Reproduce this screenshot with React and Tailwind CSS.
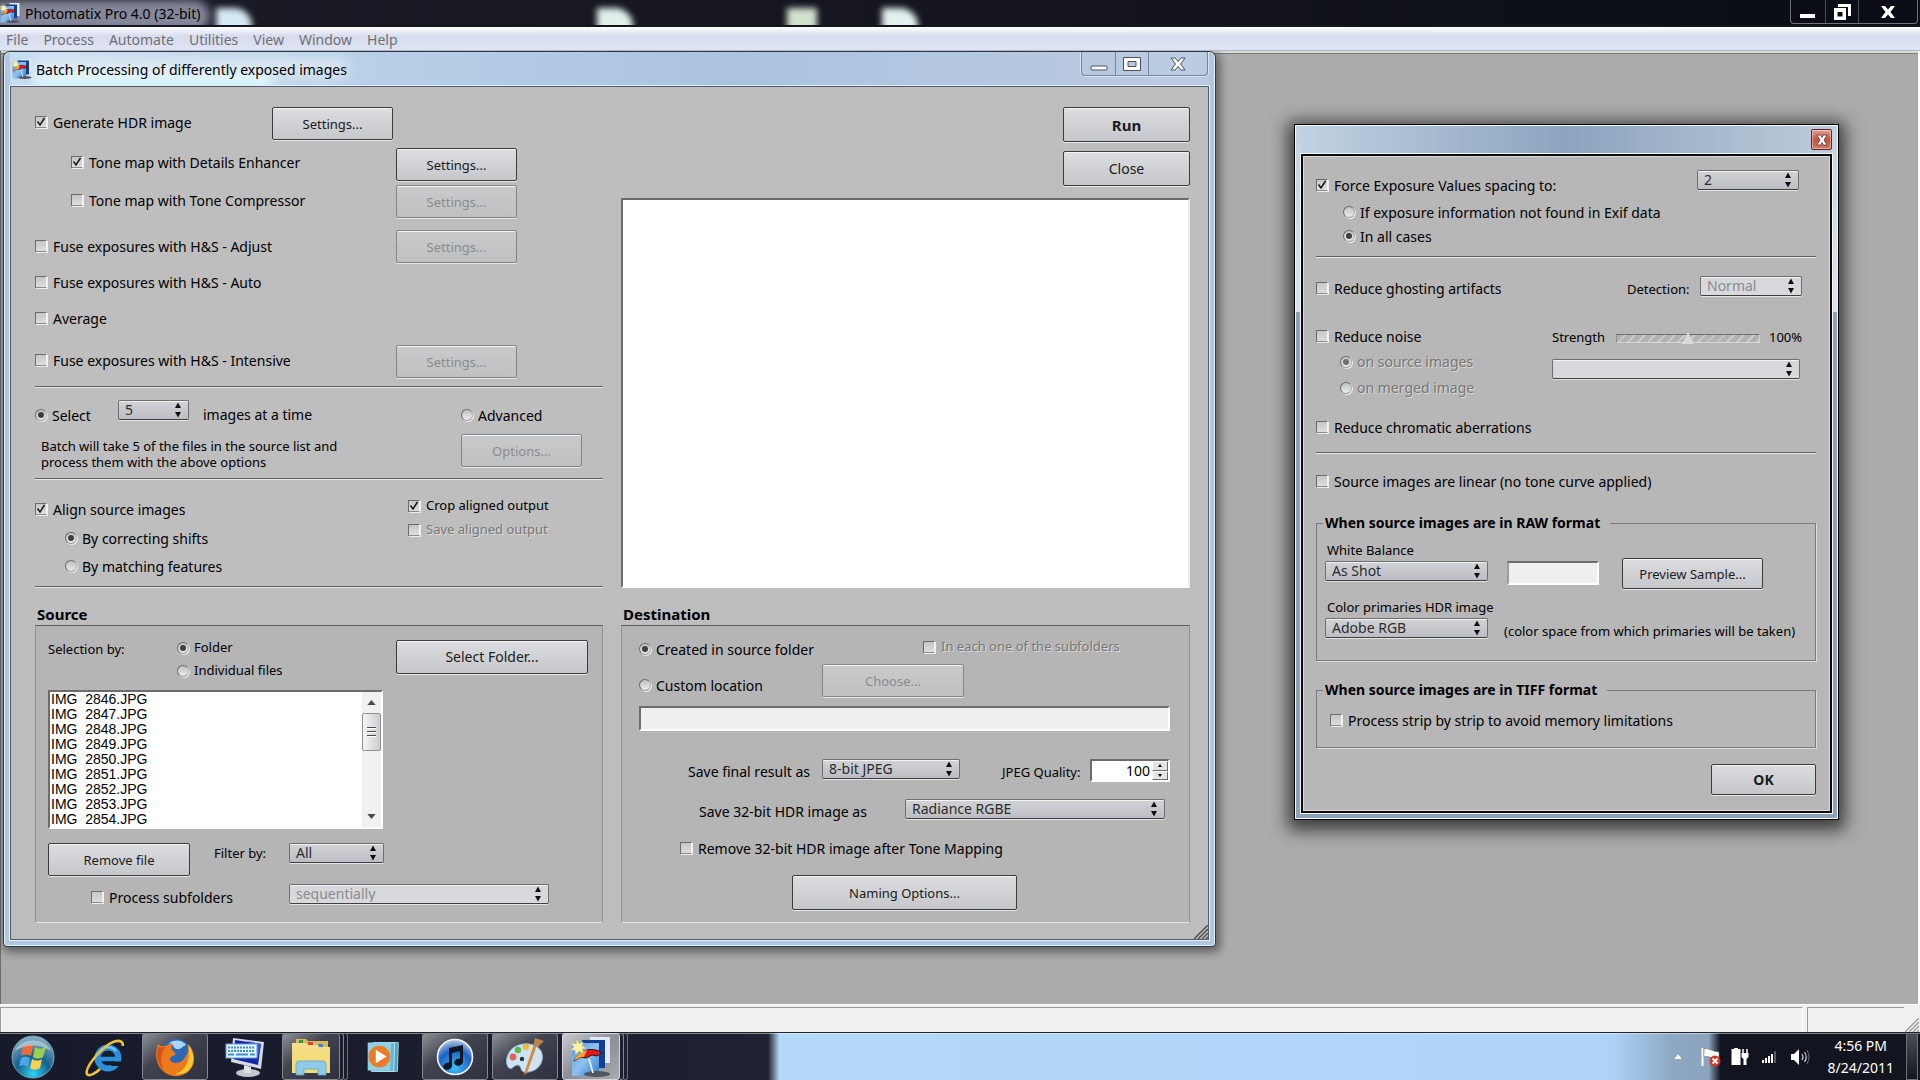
import React, {useId} from "react";
import clsx from "clsx";

const menuItems = ['File', 'Process', 'Automate', 'Utilities', 'View', 'Window', 'Help']

const files = [
  'IMG  2846.JPG',
  'IMG  2847.JPG',
  'IMG  2848.JPG',
  'IMG  2849.JPG',
  'IMG  2850.JPG',
  'IMG  2851.JPG',
  'IMG  2852.JPG',
  'IMG  2853.JPG',
  'IMG  2854.JPG',
]

/**
 * Umbrella logo, shared by the title bars and the taskbar.
 */
const PhotomatixIcon = ({className}) => (
  <svg viewBox="0 0 40 40" className={className} aria-hidden="true">
    <defs>
      <linearGradient id="pm-front" x1="0" y1="0" x2="1" y2="1">
        <stop offset="0" stopColor="#4f9be6"/>
        <stop offset="0.5" stopColor="#8fc2ef"/>
        <stop offset="1" stopColor="#2f78d2"/>
      </linearGradient>
    </defs>
    <rect x="19" y="0" width="20" height="26" fill="#dfe9f8"/>
    <rect x="11" y="3" width="23" height="28" fill="#123f8f"/>
    <rect x="1" y="6" width="27" height="33" fill="url(#pm-front)"/>
    <ellipse cx="26" cy="37" rx="13" ry="3" fill="#51565e"/>
    <path d="M18 22 L22 36" stroke="#f4f4f4" strokeWidth="1.6"/>
    <path d="M3 24 C6 15 20 8 31 16 L26 19 L21 18 L15 21 L10 20 Z" fill="#e0181a" stroke="#2a1010" strokeWidth="1"/>
    <path d="M3 24 C5 18 10 14 16 13 L13 20 L10 20 Z" fill="#f6a13a"/>
    <path d="M6 3 L8 7 L12 5 L11 9 L15 11 L11 12 L12 16 L8 14 L5 17 L4 13 L0 13 L3 10 L0 6 L5 7 Z" fill="#fff3a8" stroke="#e6cf6a" strokeWidth="0.6"/>
  </svg>
)

/**
 *
 */
const Button = ({className, disabled, children}) => (
  <button type="button"
          disabled={disabled}
          className={clsx(
            'shrink-0 rounded-[2px] border bg-linear-to-b text-center text-[13px] leading-5 shadow-[0_1px_0_#e8e8e8,inset_0_1px_0_#f4f4f4]',
            disabled ? 'border-[#858585] from-[#c9cacb] to-[#bfc0c2] text-[#8b8b8b]' : 'border-[#3c3c3c] from-[#dcdde0] to-[#c5c7cb] text-[#1b1b1b]',
            className
          )}>
    {children}
  </button>
)

/**
 * Checkbox with its caption.
 */
const Check = ({label, checked, disabled, small, className}) => (
  <label className={clsx('flex items-center gap-[6px] whitespace-nowrap', small ? 'text-[13px]' : 'text-[14px]', disabled && 'text-[#777777] [text-shadow:1px_1px_0_#dcdcdc]', className)}>
    <span className="grid size-3 shrink-0">
      <input type="checkbox"
             defaultChecked={checked}
             disabled={disabled}
             className="col-start-1 row-start-1 size-3 appearance-none border border-t-[#6c6c6c] border-l-[#6c6c6c] border-r-[#f6f6f6] border-b-[#8a8a8a] bg-linear-to-b from-[#c6c6c6] to-[#dedede] shadow-[1px_1px_0_#ededed]"/>
      {checked && (
        <svg viewBox="0 0 12 12" className="pointer-events-none col-start-1 row-start-1 size-3" aria-hidden="true">
          <path d="M2.5 5.5 L5 9 L9.5 2" fill="none" stroke="#161616" strokeWidth="1.5"/>
        </svg>
      )}
    </span>
    {label}
  </label>
)

/**
 * Radio button with its caption.
 */
const Radio = ({label, name, checked, disabled, small, className}) => (
  <label className={clsx('flex items-center gap-[5px] whitespace-nowrap', small ? 'text-[13px]' : 'text-[14px]', disabled && 'text-[#777777] [text-shadow:1px_1px_0_#dcdcdc]', className)}>
    <span className="grid size-3 shrink-0 place-items-center">
      <input type="radio"
             name={name}
             defaultChecked={checked}
             disabled={disabled}
             className="col-start-1 row-start-1 size-3 appearance-none rounded-full border border-t-[#6c6c6c] border-l-[#6c6c6c] border-r-[#b5b5b5] border-b-[#a0a0a0] bg-linear-to-b from-[#c0c0c0] to-[#ececec] shadow-[1px_1px_0_#ededed]"/>
      {checked && (
        <span className={clsx('pointer-events-none col-start-1 row-start-1 size-[6px] rounded-full', disabled ? 'bg-[#6e6e6e]' : 'bg-[#3f3f3f]')}/>
      )}
    </span>
    {label}
  </label>
)

/**
 * Pop-up menu with the double arrow on the right.
 */
const Select = ({id, value, disabled, className, title}) => (
  <span className={clsx('relative block h-5 shrink-0', className)}>
    <select id={id}
            aria-label={title}
            disabled={disabled}
            className={clsx(
              'block h-5 w-full appearance-none rounded-[2px] border border-[#6f6f6f] border-b-[#3f3f3f] bg-linear-to-b pl-[6px] text-[14px] leading-4 shadow-[0_1px_0_#e4e4e4,inset_0_1px_0_#f2f2f2] opacity-100',
              disabled ? 'from-[#d6d7da] to-[#d9dade] text-[#8b8b8b]' : 'from-[#d2d3d6] to-[#bdbec4] text-[#2c2c2c]'
            )}>
      <option>{value}</option>
    </select>
    <svg viewBox="0 0 6 16" className="pointer-events-none absolute top-[2px] right-2 h-4 w-[6px]" aria-hidden="true">
      <path d="M3 0.5 L6 6 H0 Z M3 15.5 L6 10 H0 Z" fill="#101010"/>
    </svg>
  </span>
)

/**
 *
 */
const Separator = () => (
  <hr className="h-[2px] border-0 border-t border-b border-t-[#5f5f5f] border-b-[#e9e9e9]"/>
)

const Grip = ({className, color}) => (
  <svg viewBox="0 0 14 14" className={className} aria-hidden="true">
    <path d="M0 14 L14 0 M4 14 L14 4 M8 14 L14 8 M12 14 L14 12" stroke={color} strokeWidth="1.4" fill="none"/>
  </svg>
)

/**
 * Checkboxes and options above the source panel.
 */
const ProcessOptions = () => (
  <div className="flex flex-col">
    <div className="flex items-start">
      <Check label="Generate HDR image" checked className="h-[30px] w-[237px]"/>
      <Button className="h-[33px] w-[121px]">Settings...</Button>
    </div>
    <div className="mt-2 flex items-start pl-9">
      <Check label="Tone map with Details Enhancer" checked className="h-7 w-[325px]"/>
      <Button className="h-[33px] w-[121px]">Settings...</Button>
    </div>
    <div className="mt-1 flex items-start pl-9">
      <Check label="Tone map with Tone Compressor" className="h-[30px] w-[325px]"/>
      <Button disabled className="h-[33px] w-[121px]">Settings...</Button>
    </div>
    <div className="mt-3 flex items-start">
      <Check label="Fuse exposures with H&S - Adjust" className="h-8 w-[361px]"/>
      <Button disabled className="h-[33px] w-[121px]">Settings...</Button>
    </div>
    <Check label="Fuse exposures with H&S - Auto" className="mt-1 h-[30px]"/>
    <Check label="Average" className="mt-[6px] h-[30px]"/>
    <div className="mt-3 mb-2 flex items-start">
      <Check label="Fuse exposures with H&S - Intensive" className="h-[30px] w-[361px]"/>
      <Button disabled className="h-[33px] w-[121px]">Settings...</Button>
    </div>

    <Separator/>

    <div className="mt-3 mb-2 flex">
      <div className="w-[426px]">
        <div className="flex items-start">
          <Radio name="mode" label="Select" checked className="h-[30px] w-[83px]"/>
          <Select id="count" title="Number of images" value="5" className="w-[71px]"/>
          <label htmlFor="count" className="ml-[14px] text-[14px] leading-[30px]">images at a time</label>
        </div>
        <p className="mt-2 pl-[6px] text-[13px] leading-4">
          Batch will take 5 of the files in the source list and<br/>
          process them with the above options
        </p>
      </div>
      <div>
        <Radio name="mode" label="Advanced" className="h-[30px]"/>
        <Button disabled className="mt-1 h-[33px] w-[121px]">Options...</Button>
      </div>
    </div>

    <Separator/>

    <div className="mt-[14px] mb-[6px] flex">
      <div className="w-[373px]">
        <Check label="Align source images" checked className="h-[30px]"/>
        <Radio name="align" label="By correcting shifts" checked className="ml-[30px] h-7"/>
        <Radio name="align" label="By matching features" className="ml-[30px] h-7"/>
      </div>
      <div>
        <Check small label="Crop aligned output" checked className="h-6"/>
        <Check small label="Save aligned output" disabled className="h-6"/>
      </div>
    </div>

    <Separator/>
  </div>
)

/**
 * Titled sunken panel.
 */
const Panel = ({title, className, children}) => (
  <section className="flex flex-col">
    <h2 className="pl-[2px] text-[15px] leading-[22px] font-bold">{title}</h2>
    <div className={clsx('flex flex-1 flex-col border border-x-[#929292] border-t-[#5f5f5f] border-b-[#e6e6e6] bg-[#b5b5b5]', className)}>
      {children}
    </div>
  </section>
)

/**
 *
 */
const FileList = () => (
  <div className="mt-2 flex h-[139px] w-[335px] border-2 border-t-[#6c6c6c] border-l-[#6c6c6c] border-r-white border-b-white bg-white">
    <ul className="flex-1 pl-px font-['Liberation_Sans',Arial,sans-serif] text-[14px] leading-[15px] whitespace-pre">
      {files.map((file) => (
        <li key={file}>{file}</li>
      ))}
    </ul>
    <div className="flex w-[19px] flex-col items-center bg-[#f1f1f1]">
      <svg viewBox="0 0 10 6" className="mt-2 h-[5px] w-[9px]" aria-hidden="true">
        <path d="M5 0 L10 6 H0 Z" fill="#4a4a4a"/>
      </svg>
      <div className="mt-2 flex h-[38px] w-[19px] flex-col items-center justify-center gap-[2px] rounded-[2px] border border-[#8f8f8f] bg-linear-to-r from-[#f4f4f4] to-[#cdced2]">
        <span className="h-[2px] w-[9px] border-t border-[#4c4c4c] bg-white"/>
        <span className="h-[2px] w-[9px] border-t border-[#4c4c4c] bg-white"/>
        <span className="h-[2px] w-[9px] border-t border-[#4c4c4c] bg-white"/>
      </div>
      <svg viewBox="0 0 10 6" className="mt-auto mb-2 h-[5px] w-[9px]" aria-hidden="true">
        <path d="M5 6 L10 0 H0 Z" fill="#4a4a4a"/>
      </svg>
    </div>
  </div>
)

const SourcePanel = () => (
  <Panel title="Source" className="pt-[10px] pr-[14px] pb-[10px] pl-3">
    <div className="flex items-start">
      <span className="w-[129px] text-[13px] leading-[27px]">Selection by:</span>
      <div className="w-[219px]">
        <Radio small name="by" label="Folder" checked className="h-[23px]"/>
        <Radio small name="by" label="Individual files" className="h-[23px]"/>
      </div>
      <Button className="mt-1 h-[34px] w-[192px] text-[14px]">Select Folder...</Button>
    </div>

    <FileList/>

    <div className="mt-[14px] flex items-start">
      <Button className="h-[33px] w-[142px]">Remove file</Button>
      <label htmlFor="filter" className="ml-6 w-[75px] text-[13px] leading-5">Filter by:</label>
      <Select id="filter" value="All" className="w-[95px]"/>
    </div>
    <div className="mt-2 flex items-start">
      <Check label="Process subfolders" className="h-[26px] w-[241px] pl-[43px]"/>
      <Select title="Subfolder order" value="sequentially" disabled className="w-[260px]"/>
    </div>
  </Panel>
)

const DestinationPanel = () => (
  <Panel title="Destination" className="pt-2 pr-[19px] pb-3 pl-[17px]">
    <div className="flex h-[30px] items-start">
      <Radio name="dest" label="Created in source folder" checked className="h-[30px] w-[284px]"/>
      <Check small label="In each one of the subfolders" disabled className="h-[26px]"/>
    </div>
    <div className="flex items-end">
      <Radio name="dest" label="Custom location" className="h-6 w-[183px]"/>
      <Button disabled className="h-[33px] w-[142px]">Choose...</Button>
    </div>
    <input type="text"
           aria-label="Custom location"
           className="mt-[9px] block h-[25px] w-full border-2 border-t-[#6c6c6c] border-l-[#6c6c6c] border-r-white border-b-white bg-[#efefef]"/>

    <div className="mt-7 flex items-start">
      <label htmlFor="format" className="w-[183px] pl-[49px] text-[14px] leading-[26px]">Save final result as</label>
      <Select id="format" value="8-bit JPEG" className="w-[138px]"/>
      <label htmlFor="quality" className="ml-auto w-[88px] text-[13px] leading-[26px]">JPEG Quality:</label>
      <div className="flex h-[23px] w-[80px] border-2 border-t-[#6c6c6c] border-l-[#6c6c6c] border-r-white border-b-white bg-white">
        <input id="quality" type="text" defaultValue="100" className="w-0 flex-1 pr-[2px] text-right text-[14px] leading-5"/>
        <div className="flex w-4 flex-col">
          <button type="button" aria-label="Increase" className="grid flex-1 place-items-center border border-white border-r-[#6c6c6c] border-b-[#6c6c6c] bg-[#e4e4e4]">
            <svg viewBox="0 0 4 3" className="h-[3px] w-1" aria-hidden="true"><path d="M2 0 L4 3 H0 Z"/></svg>
          </button>
          <button type="button" aria-label="Decrease" className="grid flex-1 place-items-center border border-white border-r-[#6c6c6c] border-b-[#6c6c6c] bg-[#e4e4e4]">
            <svg viewBox="0 0 4 3" className="h-[3px] w-1" aria-hidden="true"><path d="M2 3 L4 0 H0 Z"/></svg>
          </button>
        </div>
      </div>
    </div>
    <div className="mt-[14px] flex items-start pl-[60px]">
      <label htmlFor="hdr-format" className="w-[206px] text-[14px] leading-[26px]">Save 32-bit HDR image as</label>
      <Select id="hdr-format" value="Radiance RGBE" className="w-[260px]"/>
    </div>
    <Check label="Remove 32-bit HDR image after Tone Mapping" className="mt-[11px] ml-[41px] h-6"/>
    <Button className="mx-auto mt-[15px] h-[35px] w-[225px]">Naming Options...</Button>
  </Panel>
)

/**
 * Main batch window.
 */
const BatchWindow = () => (
  <section aria-label="Batch Processing"
           className="absolute top-0 left-[3px] w-[1213px] rounded-t-[7px] rounded-b-[4px] border border-[#2f3c4a] bg-[#b1c7e0] px-[6px] pb-[6px] shadow-[2px_3px_10px_2px_rgba(0,0,0,0.45),inset_0_0_0_1px_#e4effa]">
    <header className="relative flex h-[34px] items-center overflow-hidden bg-linear-to-r from-[#c6dcef] via-[#abc3df] via-60% to-[#bccbe0]">
      <span className="absolute top-5 left-6 h-5 w-60 rounded-full bg-[#d6f4fb] blur-[6px]"/>
      <span className="absolute top-1 left-5 h-6 w-80 rounded-full bg-white/40 blur-[6px]"/>
      <PhotomatixIcon className="relative ml-[2px] h-5 w-5"/>
      <h1 className="relative ml-1 pt-px text-[14px] leading-5">Batch Processing of differently exposed images</h1>
      <div className="relative mr-px ml-auto flex h-6 self-start rounded-b-[4px] border border-t-0 border-[#75879d] shadow-[0_0_0_1px_rgba(255,255,255,0.5)]">
        <button type="button" aria-label="Minimize" className="grid w-[34px] place-items-center border-r border-[#75879d]">
          <svg viewBox="0 0 18 14" className="h-[14px] w-[18px]"><rect x="1" y="9" width="16" height="4" rx="1" fill="#fff" stroke="#4b5360"/></svg>
        </button>
        <button type="button" aria-label="Maximize" className="grid w-[33px] place-items-center border-r border-[#75879d]">
          <svg viewBox="0 0 18 14" className="h-[14px] w-[18px]"><path d="M0.5 0.5 H17.5 V13.5 H0.5 Z M5 4.5 V9.5 H13 V4.5 Z" fill="#fff" fillRule="evenodd" stroke="#4b5360"/></svg>
        </button>
        <button type="button" aria-label="Close window" className="grid w-[58px] place-items-center">
          <svg viewBox="0 0 16 14" className="h-[14px] w-4"><path d="M1 1 H5 L8 4.5 L11 1 H15 L10.5 7 L15 13 H11 L8 9.5 L5 13 H1 L5.5 7 Z" fill="#fff" stroke="#4b5360"/></svg>
        </button>
      </div>
    </header>

    <div className="relative grid grid-cols-[568px_minmax(0,1fr)] gap-x-[18px] gap-y-[15px] border border-[#4e5c6c] bg-[#bebebe] pt-5 pr-[18px] pb-4 pl-6 shadow-[0_0_0_1px_#e4effa]">
      <ProcessOptions/>
      <div className="flex flex-col">
        <div className="flex flex-col items-end gap-[9px]">
          <Button className="h-[35px] w-[127px] text-[15px] font-bold">Run</Button>
          <Button className="h-[35px] w-[127px] text-[14px]">Close</Button>
        </div>
        <textarea readOnly
                  aria-label="Progress"
                  className="mt-3 block w-full flex-1 resize-none border-2 border-t-[#6c6c6c] border-l-[#6c6c6c] border-r-[#ededed] border-b-white bg-white"/>
      </div>
      <SourcePanel/>
      <DestinationPanel/>
      <Grip color="#4b4b4b" className="absolute right-0 bottom-0 size-[14px]"/>
    </div>
  </section>
)

/**
 * Fieldset with an etched frame.
 */
const Group = ({title, className, children}) => (
  <fieldset className={clsx('border border-[#7a7a7a] pl-2 shadow-[1px_1px_0_#dedede] outline-none', className)}>
    <legend className="-ml-[2px] bg-[#b7b7b7] pr-[10px] pl-[2px] text-[14px] leading-5 font-bold">{title}</legend>
    {children}
  </fieldset>
)

/**
 * HDR generation settings.
 */
const SettingsDialog = () => {
  const strengthId = useId()

  return (
    <section role="dialog"
             aria-label="Generate HDR settings"
             className="absolute top-[73px] left-[1294px] w-[545px] border border-black bg-linear-to-b from-[#c3d2e0] via-[#dbe4ec] via-27% to-[#8da1b7] to-27% px-[6px] pb-[6px] shadow-[0_4px_16px_6px_rgba(0,0,0,0.65),inset_0_0_0_1px_#f2f6fa]">
      <header className="my-px flex h-[27px] items-center justify-end bg-linear-to-r from-[#c0d2e2] via-[#8da4bf] to-[#bccbda]">
        <button type="button" aria-label="Close dialog" className="grid h-[21px] w-[21px] place-items-center rounded-[2px] border border-[#5b2a24] bg-linear-to-b from-[#e3a195] via-[#c4523c] to-[#d4795f] shadow-[inset_0_0_0_1px_rgba(255,255,255,0.4)]">
          <svg viewBox="0 0 12 12" className="size-3"><path d="M1 1 H4.5 L6 3.5 L7.5 1 H11 L8 6 L11 11 H7.5 L6 8.5 L4.5 11 H1 L4 6 Z" fill="#fff" stroke="#4c3a3a" strokeWidth="0.8"/></svg>
        </button>
      </header>

      <div className="flex flex-col border-2 border-[#0c0c0c] bg-[#b7b7b7] pt-[14px] pr-[14px] pb-4 pl-[13px] shadow-[0_0_0_1px_#f4f7fa,inset_0_0_0_1px_#dadada]">
        <div className="flex items-start justify-between pr-[17px]">
          <Check label="Force Exposure Values spacing to:" checked className="h-[30px]"/>
          <Select title="Exposure Values spacing" value="2" className="w-[102px]"/>
        </div>
        <Radio name="ev" label="If exposure information not found in Exif data" className="ml-[27px] h-6"/>
        <Radio name="ev" label="In all cases" checked className="mb-2 ml-[27px] h-6"/>

        <Separator/>

        <div className="mt-[18px] flex items-start pr-[14px]">
          <Check label="Reduce ghosting artifacts" className="mr-auto h-6"/>
          <label htmlFor="detection" className="w-[73px] text-[13px] leading-[26px]">Detection:</label>
          <Select id="detection" value="Normal" disabled className="w-[102px]"/>
        </div>

        <div className="mt-[22px] flex">
          <div className="w-[236px]">
            <Check label="Reduce noise" className="h-6"/>
            <Radio name="noise" label="on source images" checked disabled className="ml-6 h-[27px]"/>
            <Radio name="noise" label="on merged image" disabled className="ml-6 h-[25px]"/>
          </div>
          <div>
            <div className="flex h-7 items-center">
              <label htmlFor={strengthId} className="w-[64px] text-[13px]">Strength</label>
              <input id={strengthId}
                     type="range"
                     defaultValue="50"
                     disabled
                     className="h-[9px] w-[144px] appearance-none border border-t-[#6f6f6f] border-r-[#d5d5d5] border-b-[#d5d5d5] border-l-[#8c8c8c] bg-[repeating-linear-gradient(135deg,#b3b3b3_0_5px,#cbcbcb_5px_7px)] [&::-webkit-slider-thumb]:h-3 [&::-webkit-slider-thumb]:w-3 [&::-webkit-slider-thumb]:appearance-none [&::-webkit-slider-thumb]:bg-[#d9d9d9] [&::-webkit-slider-thumb]:[clip-path:polygon(50%_0,100%_100%,0_100%)]"/>
              <span className="ml-[9px] text-[13px]">100%</span>
            </div>
            <Select title="Noise strength" value="" disabled className="mt-[7px] w-[248px]"/>
          </div>
        </div>
        <Check label="Reduce chromatic aberrations" className="mt-[14px] mb-3 h-[26px]"/>

        <Separator/>

        <Check label="Source images are linear (no tone curve applied)" className="mt-[14px] h-[26px]"/>

        <Group title="When source images are in RAW format" className="mt-[19px] pb-4">
          <div className="mt-[6px] flex items-start">
            <div className="w-[163px]">
              <label htmlFor="white-balance" className="block pl-[2px] text-[13px] leading-[22px]">White Balance</label>
              <Select id="white-balance" value="As Shot" className="w-full"/>
            </div>
            <input type="text"
                   aria-label="Color temperature"
                   className="mt-[22px] ml-[19px] block h-6 w-[92px] border-2 border-t-[#6c6c6c] border-l-[#9c9c9c] border-r-white border-b-white bg-[#efefef]"/>
            <Button className="mt-[19px] ml-[23px] h-[31px] w-[141px]">Preview Sample...</Button>
          </div>
          <label htmlFor="primaries" className="mt-[7px] block pl-[2px] text-[13px] leading-[22px]">Color primaries HDR image</label>
          <div className="flex items-start">
            <Select id="primaries" value="Adobe RGB" className="w-[163px]"/>
            <span className="ml-4 text-[13px] leading-[26px]">(color space from which primaries will be taken)</span>
          </div>
        </Group>

        <Group title="When source images are in TIFF format" className="mt-[19px] pb-[14px]">
          <Check label="Process strip by strip to avoid memory limitations" className="mt-[7px] ml-[5px] h-[26px]"/>
        </Group>

        <Button className="mt-4 h-[31px] w-[105px] self-end text-[14px] font-bold">OK</Button>
      </div>
    </section>
  )
}

/**
 * Application caption, seen over the blurred desktop.
 */
const TitleBar = () => (
  <header className="relative flex h-[27px] shrink-0 items-center overflow-hidden border-b-2 border-b-[#15161c] bg-linear-to-r from-[#1b1c27] via-[#14151f] to-[#0a0d15]">
    <span className="absolute top-2 left-[216px] h-8 w-9 rounded-tr-[18px] bg-[#d3e9f5] blur-[3px]"/>
    <span className="absolute top-2 left-[597px] h-8 w-9 rounded-tr-[18px] bg-[#e2f0ea] blur-[3px]"/>
    <span className="absolute top-2 left-[787px] h-8 w-[30px] bg-[#d3e2cf] blur-[3px]"/>
    <span className="absolute top-2 left-[882px] h-8 w-9 rounded-tr-[18px] bg-[#e2f2ee] blur-[3px]"/>
    <span className="absolute top-0 -left-3 h-8 w-[222px] rounded-full bg-[#85889a] blur-[5px]"/>
    <PhotomatixIcon className="relative h-5 w-5"/>
    <span className="relative ml-[5px] pt-[2px] text-[14px] leading-5 text-black">Photomatix Pro 4.0 (32-bit)</span>
    <div className="relative mr-[2px] ml-auto flex h-6 self-start rounded-b-[4px] border border-t-0 border-[#6f727a]">
      <button type="button" aria-label="Minimize application" className="grid w-[35px] place-items-center border-r border-[#4a4d56]">
        <svg viewBox="0 0 18 16" className="h-4 w-[18px]"><rect x="1" y="10" width="15" height="4" fill="#fff"/></svg>
      </button>
      <button type="button" aria-label="Restore application" className="grid w-[33px] place-items-center border-r border-[#4a4d56]">
        <svg viewBox="0 0 18 16" className="h-4 w-[18px]">
          <path d="M5 0 H18 V12 H15 V3 H5 Z" fill="#fff"/>
          <path d="M1 4 H13 V16 H1 Z M4.500 8 V12.500 H9.500 V8 Z" fill="#fff" fillRule="evenodd"/>
        </svg>
      </button>
      <button type="button" aria-label="Close application" className="grid w-[58px] place-items-center">
        <svg viewBox="0 0 14 12" className="h-3 w-[14px]"><path d="M0 0 H4 L7 3.500 L10 0 H14 L9.500 6 L14 12 H10 L7 8.500 L4 12 H0 L4.500 6 Z" fill="#fff"/></svg>
      </button>
    </div>
  </header>
)

const MenuBar = () => (
  <nav className="flex h-6 shrink-0 items-center gap-[15px] border-b border-[#b0b5c2] bg-linear-to-b from-white via-[#d6dced] via-40% to-[#e0e4f5] pt-[2px] pl-[6px]">
    {menuItems.map((item) => (
      <button type="button" key={item} className="text-[14px] leading-5 text-[#6f7076]">{item}</button>
    ))}
  </nav>
)

const StartOrb = () => (
  <svg viewBox="0 0 44 44" className="size-11" aria-hidden="true">
    <defs>
      <radialGradient id="orb" cx="0.5" cy="0.9" r="0.9">
        <stop offset="0" stopColor="#2fd4f4"/>
        <stop offset="0.45" stopColor="#13608f"/>
        <stop offset="1" stopColor="#8fb2c4"/>
      </radialGradient>
    </defs>
    <circle cx="22" cy="22" r="21" fill="url(#orb)" stroke="#7ba3b8" strokeWidth="1"/>
    <path d="M12 12 C15 9 19 9 22 11 L20 21 C17 19 13 19 10 21 Z" fill="#ec6a3c"/>
    <path d="M24 12 C27 14 31 14 35 12 L32 22 C29 24 25 24 22 22 Z" fill="#9ccf4e"/>
    <path d="M10 23 C13 21 16 21 19 23 L17 32 C14 30 11 30 8 31 Z" fill="#4fa6e4"/>
    <path d="M21 24 C25 26 28 26 31 24 L29 33 C26 35 22 35 19 33 Z" fill="#fbd04b"/>
    <path d="M4 16 C10 2 34 2 40 16 C30 9 14 9 4 16 Z" fill="#fff" opacity="0.4"/>
  </svg>
)

const ExplorerIcon = () => (
  <svg viewBox="0 0 40 40" className="size-10" aria-hidden="true">
    <circle cx="24" cy="21" r="10.500" fill="none" stroke="#2a90dc" strokeWidth="6"/>
    <path d="M16 22 H37" stroke="#2a90dc" strokeWidth="4.500"/>
    <path d="M27 24.500 H39 L37 29 H27 Z" fill="#171a2b"/>
    <path d="M16 14 C20 9 28 9 32 14" stroke="#84c8f4" strokeWidth="2" fill="none"/>
    <path d="M39 9 C39 1 29 3 20 11 C9 20 1 33 3 37 C5 40 12 36 16 32" fill="none" stroke="#f0c23a" strokeWidth="2.600"/>
  </svg>
)

const FirefoxIcon = () => (
  <svg viewBox="0 0 40 40" className="size-10" aria-hidden="true">
    <circle cx="21" cy="18" r="16" fill="#2b69b8"/>
    <path d="M14 6 C20 2 28 3 31 8 C27 9 26 13 22 12 C18 12 20 8 14 6 Z" fill="#a9d6f2"/>
    <path d="M3 7 C5 10 8 9 11 9 C14 6 17 6 18 7 C16 9 16 12 18 14 C20 15 21 16 20 18 C17 19 15 20 15 23 C17 27 24 27 28 23 C33 18 34 12 33 7 C41 15 41 28 34 34 C27 41 14 41 7 33 C0 26 0 15 3 7 Z" fill="#ec7a1c"/>
    <path d="M33 8 C40 15 40 27 34 33 C30 37 24 38 20 37 C32 34 36 20 33 8 Z" fill="#f9c634"/>
    <path d="M3 10 C1 18 2 27 9 34 C4 24 6 14 11 10 C8 10 5 11 3 10 Z" fill="#d2521a"/>
  </svg>
)

const MonitorIcon = () => (
  <svg viewBox="0 0 40 40" className="size-10" aria-hidden="true">
    <path d="M8 1 L39 5 L36 32 L6 25 Z" fill="#d6dbe2"/>
    <path d="M10 3 L36 7 L33 28 L8 22 Z" fill="#1427a8"/>
    <path d="M22 4 L36 7 L33 20 Z" fill="#3a57d6"/>
    <ellipse cx="23" cy="36" rx="12" ry="4" fill="#c3c7cd"/>
    <path d="M19 28 L26 30 L26 36 L19 36 Z" fill="#dfe2e6"/>
    <rect x="1" y="7" width="31" height="14" fill="#e7f3fc" stroke="#5fa0d8"/>
    <path d="M3 10.500 H30 M3 14 H30" stroke="#3f8fd4" strokeWidth="2" strokeDasharray="2 1"/>
    <path d="M3 17.500 H9 M11 17.500 H23 M25 17.500 H30" stroke="#3f8fd4" strokeWidth="2"/>
  </svg>
)

const FolderIcon = () => (
  <svg viewBox="0 0 40 40" className="size-10" aria-hidden="true">
    <path d="M5 2 H15 L17 4 H37 V34 H5 Z" fill="#d9b95a"/>
    <rect x="8" y="3" width="4" height="3" fill="#2f9a4a"/>
    <rect x="17" y="5" width="5" height="3" fill="#cf4a30"/>
    <rect x="27" y="7" width="5" height="3" fill="#3a84c8"/>
    <path d="M1 6 H15 L17 8 H27 L28 10 H39 V36 H1 Z" fill="#f4e08c"/>
    <path d="M1 12 H39 V36 H1 Z" fill="#f2dc7c"/>
    <path d="M5 38 V27 Q5 24 8 24 H32 Q35 24 35 27 V38 H27 V32 H13 V38 Z" fill="#8fcbe8" stroke="#5ea3c8" strokeWidth="0.8"/>
  </svg>
)

const MediaPlayerIcon = () => (
  <svg viewBox="0 0 40 40" className="size-9" aria-hidden="true">
    <path d="M14 4 H37 L36 36 H12 Z" fill="#4fa0bd" stroke="#a8dcec"/>
    <path d="M9 4 H33 L32 36 H7 Z" fill="#69b6d2" stroke="#b9e6f2"/>
    <path d="M3 4 H29 L28 35 H3 Z" fill="#8fd0e4"/>
    <circle cx="16" cy="19.500" r="12" fill="#ee7a24"/>
    <path d="M12 12 L24 19.500 L12 27 Z" fill="#fff"/>
  </svg>
)

const ItunesIcon = () => (
  <svg viewBox="0 0 40 40" className="size-10" aria-hidden="true">
    <defs>
      <radialGradient id="itunes" cx="0.5" cy="0.8" r="0.8">
        <stop offset="0" stopColor="#3fc0f8"/>
        <stop offset="0.6" stopColor="#1a62c4"/>
        <stop offset="1" stopColor="#b8cbe2"/>
      </radialGradient>
    </defs>
    <circle cx="20" cy="20" r="17.500" fill="url(#itunes)" stroke="#f2f4f8" strokeWidth="1.600"/>
    <path d="M14 11 L28 8 V25 A4.500 3.600 -20 1 1 25 21.500 V14 L17 16 V29 A4.500 3.600 -20 1 1 14 25.500 Z" fill="#111722"/>
  </svg>
)

const PaintIcon = () => (
  <svg viewBox="0 0 40 40" className="size-10" aria-hidden="true">
    <path d="M5 14 C12 5 30 4 36 14 C41 25 32 36 20 35 C15 35 17 29 13 28 C8 28 8 33 4 31 C0 27 1 20 5 14 Z" fill="#cfe4f2" stroke="#8fb8d2"/>
    <circle cx="8" cy="20" r="3.400" fill="#e0625a"/>
    <circle cx="13" cy="13" r="3.200" fill="#5cb848"/>
    <circle cx="21" cy="10" r="3.200" fill="#f0b73a"/>
    <circle cx="17" cy="22" r="2.200" fill="#2c3140"/>
    <path d="M32 8 L22 36 L19 38 L20 34 L29 7 Z" fill="#d98a3a"/>
    <path d="M30 1 L39 4 L33 10 L28 9 Z" fill="#b98448"/>
  </svg>
)

/**
 * Taskbar button, "stacked" draws the edges of the grouped windows.
 */
const TaskButton = ({title, active, stacked, children}) => (
  <div className="flex w-[66px]">
    <button type="button"
            aria-label={title}
            className={clsx(
              'grid flex-1 place-items-center rounded-[3px] border bg-linear-to-br',
              active ? 'border-[#d3d5da] from-[#c8c9ce] via-[#8d8f98] to-[#a9abb3]' : 'border-[#85878f] from-[#8f9198] via-[#41434f] via-40% to-[#2e303e]'
            )}>
      {children}
    </button>
    {stacked && <span className="w-1 rounded-r-[3px] border border-l-0 border-[#85878f]"/>}
    {stacked && <span className="w-1 rounded-r-[3px] border border-l-0 border-[#6a6c75]"/>}
  </div>
)

const Tray = () => (
  <div className="ml-auto flex items-center">
    <svg viewBox="0 0 10 7" className="h-[7px] w-[10px]" aria-hidden="true">
      <path d="M5 0.500 L9.500 6.500 H0.500 Z" fill="#fff" stroke="#6a7f96" strokeWidth="0.500"/>
    </svg>
    <svg viewBox="0 0 20 20" className="ml-[18px] size-5" aria-hidden="true">
      <path d="M1.500 1 V19" stroke="#fff" strokeWidth="2"/>
      <path d="M3 2 C7 0 9 4 18 5 V11 C10 12 7 8 3 10 Z" fill="#fff" stroke="#55657a" strokeWidth="0.500"/>
      <circle cx="14" cy="14" r="5.500" fill="#d2382c"/>
      <path d="M11.500 11.500 L16.500 16.500 M16.500 11.500 L11.500 16.500" stroke="#fff" strokeWidth="1.800"/>
    </svg>
    <svg viewBox="0 0 18 20" className="ml-[10px] h-5 w-[18px]" aria-hidden="true">
      <path d="M3 2 V1 H7 V2 H9.500 V18 H0.500 V2 Z" fill="#fff"/>
      <path d="M12 2 V6 M16 2 V6" stroke="#fff" strokeWidth="1.500"/>
      <path d="M10.500 6 H17.500 V10 L15.500 12 V18 H12.500 V12 L10.500 10 Z" fill="#fff"/>
    </svg>
    <svg viewBox="0 0 15 14" className="ml-[13px] h-[14px] w-[15px]" aria-hidden="true">
      <path d="M0 10 H2 V13 H0 Z M3 8 H5 V13 H3 Z M6 6 H8 V13 H6 Z M9 4 H11 V13 H9 Z" fill="#fff"/>
      <path d="M12 1 H14 V13 H12 Z" fill="#565a63"/>
    </svg>
    <svg viewBox="0 0 20 20" className="ml-[13px] size-5" aria-hidden="true">
      <path d="M1 7 H4 L9 2 V18 L4 13 H1 Z" fill="#fff"/>
      <path d="M12 7 Q14 10 12 13 M14.500 5 Q18 10 14.500 15" stroke="#c9ccd2" fill="none" strokeWidth="1.200"/>
      <path d="M17 3 Q21 10 17 17" stroke="#6a6e78" fill="none"/>
    </svg>
    <div className="mr-3 ml-[18px] text-center text-[14px] leading-[22px] text-white">
      <div>4:56 PM</div>
      <div>8/24/2011</div>
    </div>
    <button type="button" aria-label="Show desktop" className="mr-[2px] h-full w-3 border border-[#6d7078] bg-linear-to-b from-[#4b4e57] to-[#14161f]"/>
  </div>
)

const Taskbar = () => (
  <footer className="flex h-12 shrink-0 border-t border-[#20232c] bg-[linear-gradient(to_right,#171a2b_0,#1f2130_40%,#b4d8f8_40.6%,#afd2f8_84%,#8ea9c4_87%,#8ba3bc_89%,#12151f_89.6%,#12151f_100%)] shadow-[inset_0_1px_0_rgba(255,255,255,0.45)]">
    <button type="button" aria-label="Start" className="grid w-[66px] place-items-center"><StartOrb/></button>
    <button type="button" aria-label="Internet Explorer" className="grid w-[76px] place-items-center"><ExplorerIcon/></button>
    <TaskButton title="Firefox"><FirefoxIcon/></TaskButton>
    <button type="button" aria-label="On-screen keyboard" className="grid w-[74px] place-items-center"><MonitorIcon/></button>
    <TaskButton title="Windows Explorer" stacked><FolderIcon/></TaskButton>
    <button type="button" aria-label="Media Player" className="grid w-[74px] place-items-center pr-1"><MediaPlayerIcon/></button>
    <div className="flex gap-1">
      <TaskButton title="iTunes"><ItunesIcon/></TaskButton>
      <TaskButton title="Paint"><PaintIcon/></TaskButton>
      <TaskButton title="Photomatix" active stacked><PhotomatixIcon className="size-10"/></TaskButton>
    </div>
    <Tray/>
  </footer>
)

/**
 *
 */
const App = () => (
  <div className="flex min-h-screen flex-col bg-[#f0f0f0] font-['Noto_Sans','Open_Sans',sans-serif] text-black">
    <TitleBar/>
    <MenuBar/>

    {/* Workspace that holds the child windows */}
    <main className="relative flex-1 overflow-hidden border-r-2 border-b border-white bg-[#ababab] shadow-[inset_1px_0_0_#6d6d6d,inset_0_2px_0_#dcdcdc,inset_0_3px_0_#777777]">
      <BatchWindow/>
      <SettingsDialog/>
    </main>

    {/* Status bar */}
    <div className="relative flex h-[27px] shrink-0 gap-1 pt-[2px] pr-4">
      <div className="flex-1 border-t border-r border-l border-[#9c9c9c] border-r-white"/>
      <div className="w-[97px] border-t border-l border-[#9c9c9c]"/>
      <Grip color="#9a9a9a" className="absolute right-px bottom-0 size-[14px]"/>
    </div>

    <Taskbar/>
  </div>
)

export default App
